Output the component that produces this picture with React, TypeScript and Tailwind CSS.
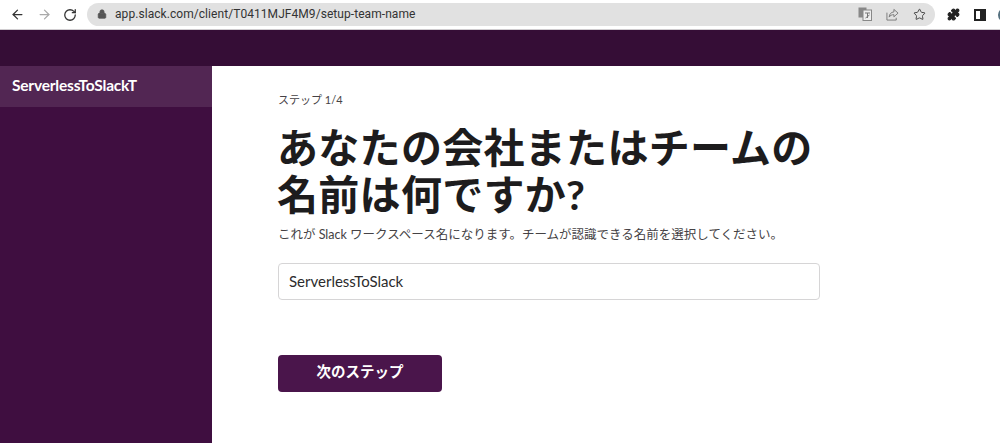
import React from 'react';
import { ArrowLeft, ArrowRight, RotateCw, Lock, Star, Puzzle } from 'lucide-react';

const font = "font-['Lato','Noto_Sans_CJK_JP',sans-serif]";

function BrowserBar() {
  return (
    <div className="h-[30px] bg-white flex items-center border-b border-[#d0cdd0] overflow-hidden">
      <div className="flex items-center pl-[10px] gap-[12px] w-[87px] shrink-0">
        <ArrowLeft className="w-[15px] h-[15px] text-[#333] shrink-0" strokeWidth={2} />
        <ArrowRight className="w-[15px] h-[15px] text-[#aaa] shrink-0" strokeWidth={2} />
        <RotateCw className="w-[14px] h-[14px] text-[#333] shrink-0 -ml-[1px]" strokeWidth={2.2} />
      </div>
      <div className="h-[23px] w-[848px] shrink-0 bg-[#e1e1e1] rounded-full flex items-center pl-[10px] pr-[9px] mb-[1px]">
        <Lock className="w-[10px] h-[10px] text-[#555] fill-[#555] shrink-0" />
        <span className="ml-[8px] text-[12px] tracking-[0.06px] text-[#333] font-['Roboto',sans-serif]">
          app.slack.com/client/T0411MJF4M9/setup-team-name
        </span>
        <div className="ml-auto flex items-center gap-[14px] text-[#777]">
          <svg viewBox="0 0 14 14" className="w-[14px] h-[14px]">
            <rect x="0.5" y="0.5" width="8" height="10" fill="#888" />
            <rect x="5" y="3" width="8.5" height="10.5" fill="#eee" stroke="#888" />
            <path d="M7 6h5M9.5 6v5M7.5 11l4-3" stroke="#777" fill="none" />
          </svg>
          <svg viewBox="0 0 14 14" className="w-[13px] h-[13px]" fill="none" stroke="currentColor" strokeWidth="1">
            <path d="M8.5 1.5 13 5.5l-4.5 4V7.2C6 7.2 4.5 8 3.4 9.8c.2-3.2 2-5.3 5.1-5.6z" strokeLinejoin="round" />
            <path d="M1 5v8h10v-2.5" />
          </svg>
          <Star className="w-[13px] h-[13px] text-[#444]" strokeWidth={1.8} />
        </div>
      </div>
      <div className="flex items-center ml-[12px] gap-[14px] shrink-0">
        <Puzzle className="w-[13px] h-[13px] text-[#222] fill-[#222]" />
        <div className="w-[12px] h-[12px] border-2 border-[#222] border-r-[6px]" />
        <div className="w-[14px] h-[14px] rounded-full bg-[#54707f] ml-[-2px]" />
      </div>
    </div>
  );
}

export default function App() {
  return (
    <div className={`w-[1000px] h-[443px] overflow-hidden bg-white flex flex-col ${font}`}>
      <BrowserBar />
      <div className="h-[36px] bg-[#350d36] shrink-0" />
      <div className="flex flex-1 min-h-0">
        <aside className="w-[212px] bg-[#3f0e40] shrink-0">
          <div className="h-[41px] bg-[#522653] flex items-center pl-[12px] pb-[2px]">
            <span className="text-white font-bold text-[15.5px] tracking-[-0.2px]">ServerlessToSlackT</span>
          </div>
        </aside>
        <main className="flex-1 pl-[66px] pt-[26px]">
          <div className="text-[11px] leading-[16px] text-[#454245]">ステップ 1/4</div>
          <h1 className="mt-[16px] -ml-[1px] w-[560px] text-[41px] leading-[47px] tracking-[0.3px] font-bold text-[#1d1c1d]">
            あなたの会社またはチームの
            <br />
            名前は何ですか?
          </h1>
          <p className="mt-[8px] text-[12.5px] leading-[18px] text-[#454245] whitespace-nowrap">
            これが Slack ワークスペース名になります。チームが認識できる名前を選択してください。
          </p>
          <input
            readOnly
            value="ServerlessToSlack"
            className="mt-[19px] block w-[542px] h-[37px] px-[10px] pb-[1px] text-[15px] text-[#2c2b2c] bg-white border border-[#d6d5d6] rounded-[4px] outline-none"
          />
          <button className="mt-[55px] w-[164px] h-[37px] pb-[4px] rounded-[4px] bg-[#4a154b] text-white font-bold text-[14.5px] flex items-center justify-center">
            次のステップ
          </button>
        </main>
      </div>
    </div>
  );
}
